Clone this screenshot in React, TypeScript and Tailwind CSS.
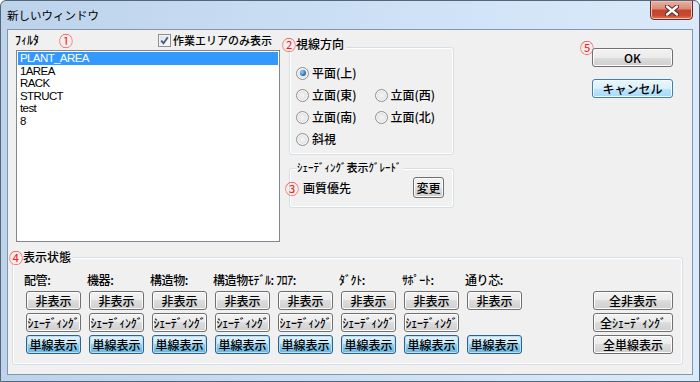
import type { ReactNode } from "react";

const BTN =
  "flex items-center justify-center rounded-[3px] border border-[#707070] bg-[linear-gradient(to_bottom,#f2f2f2_0%,#ebebeb_50%,#dddddd_50%,#cfcfcf_100%)] shadow-[inset_0_0_0_1px_#fcfcfc] text-[12px] leading-none text-black whitespace-nowrap";
const BTN_BLUE =
  "flex items-center justify-center rounded-[3px] border border-[#2c628b] bg-[linear-gradient(to_bottom,#e5f4fc_0%,#c4e5f6_50%,#98d1ef_50%,#68b3db_100%)] shadow-[inset_0_0_0_1px_#b6def4] text-[12px] leading-none text-black whitespace-nowrap";
const BTN_FOCUS =
  "flex items-center justify-center rounded-[3px] border border-[#3c7fb1] bg-[linear-gradient(to_bottom,#eaf6fd_0%,#d9f0fc_50%,#bee6fd_50%,#a7d9f5_100%)] shadow-[inset_0_0_0_1px_#f4fbff] text-[12px] leading-none text-black whitespace-nowrap";
const GROUP =
  "rounded-[3px] border border-[#d5dfe5] shadow-[inset_0_0_0_1px_#ffffff]";

const layers = ["PLANT_AREA", "1AREA", "RACK", "STRUCT", "test", "8"];

const columns = [
  { label: "配管:", shading: true },
  { label: "機器:", shading: true },
  { label: "構造物:", shading: true },
  { label: "構造物ﾓﾃﾞﾙ:", shading: true },
  { label: "ﾌﾛｱ:", shading: true },
  { label: "ﾀﾞｸﾄ:", shading: true },
  { label: "ｻﾎﾟｰﾄ:", shading: true },
  { label: "通り芯:", shading: false },
];

function Mark({ children }: { children: ReactNode }) {
  return (
    <span className="block text-[14px] leading-[14px] font-normal text-[#ff1a1a]">{children}</span>
  );
}

function Radio({ label, checked }: { label: string; checked?: boolean }) {
  return (
    <div className="flex w-[83px] items-center gap-[3px]">
      <div className="flex h-[13px] w-[13px] items-center justify-center rounded-full border border-[#8e8f8f] bg-[radial-gradient(circle,#f6f6f6_0%,#e4e4e4_55%,#d2d2d2_100%)] shadow-[inset_0_0_0_1px_#fafafa]">
        {checked && (
          <div className="h-[6px] w-[6px] rounded-full bg-[radial-gradient(circle_at_35%_35%,#9bd6ff_0%,#2f78c4_55%,#164d8c_100%)]" />
        )}
      </div>
      <span className="text-[12px] leading-[14px] whitespace-nowrap">{label}</span>
    </div>
  );
}

export default function App() {
  return (
    <div className="flex h-[382px] w-[700px] flex-col overflow-hidden rounded-t-[6px] border border-[#56667a] bg-[linear-gradient(to_right,#bcd3eb,#cfe2f6_60%,#dbeafa)] font-['Noto_Sans_CJK_JP',sans-serif] font-medium text-black">
      {/* title bar */}
      <div className="flex h-[28px] shrink-0 items-start">
        <span className="ml-[6px] mt-[7px] text-[11.5px] leading-[14px] font-normal">新しいウィンドウ</span>
        <div className="-mt-px ml-auto mr-[6px] flex h-[20px] w-[43px] items-center justify-center rounded-b-[4px] border border-[#6b2a20] bg-[linear-gradient(to_bottom,#eab0a2_0%,#d98a76_45%,#c2432b_50%,#c94a30_80%,#e2785c_100%)] shadow-[inset_0_0_0_1px_#f2c0b4]">
          <svg width="14" height="11" viewBox="0 0 14 11">
            <path d="M2 1.5 L12 9.5 M12 1.5 L2 9.5" stroke="#4a2320" strokeWidth="4.2" strokeLinecap="round" />
            <path d="M2 1.5 L12 9.5 M12 1.5 L2 9.5" stroke="#ffffff" strokeWidth="2.4" strokeLinecap="round" />
          </svg>
        </div>
      </div>

      {/* client */}
      <div className="mx-[6px] mb-[6px] flex flex-1 flex-col border border-[#8596ab] bg-[#f0f0f0]">
        <div className="flex h-[212px] shrink-0">
          {/* filter */}
          <div className="ml-[8px] flex w-[264px] flex-col">
            <div className="flex h-[20px] items-center">
              <span className="-ml-px text-[12px] leading-[14px]">ﾌｨﾙﾀ</span>
              <span className="ml-[20px]">
                <Mark>①</Mark>
              </span>
              <label className="ml-auto mr-[8px] flex items-center gap-[2px]">
                <span className="flex h-[13px] w-[13px] items-center justify-center border border-[#8e8f8f] bg-[linear-gradient(135deg,#dedede,#ffffff)] shadow-[inset_0_0_0_1px_#f4f4f4]">
                  <svg width="9" height="9" viewBox="0 0 9 9">
                    <path d="M1.2 4.6 L3.5 7.2 L7.8 1.2" fill="none" stroke="#3d5d8c" strokeWidth="1.8" />
                  </svg>
                </span>
                <span className="text-[11px] leading-[14px] whitespace-nowrap">作業エリアのみ表示</span>
              </label>
            </div>
            <div className="h-[192px] border border-[#828790] bg-white p-px font-['Liberation_Sans',sans-serif] text-[11.5px] font-normal tracking-[-0.6px]">
              {layers.map((name, i) => (
                <div
                  key={name}
                  className={
                    i === 0
                      ? "h-[12.5px] bg-[#3399ff] pl-[2px] leading-[12.5px] text-white"
                      : "h-[12.5px] pl-[2px] leading-[12.5px]"
                  }
                >
                  {name}
                </div>
              ))}
            </div>
          </div>

          {/* view direction + shading grade */}
          <div className="ml-[3px] flex w-[171px] flex-col">
            <div className={`ml-[6px] mt-[17px] pb-[4px] ${GROUP}`}>
              <div className="-ml-[8px] -mt-[11px] flex w-fit items-center bg-[#f0f0f0] pr-[2px]">
                <Mark>②</Mark>
                <span className="text-[12px] leading-[14px]">視線方向</span>
              </div>
              <div className="mt-[11px] flex flex-col pl-[6px]">
                <div className="flex h-[22px] items-center">
                  <Radio label="平面(上)" checked />
                </div>
                <div className="flex h-[22px] items-center">
                  <Radio label="立面(東)" />
                  <Radio label="立面(西)" />
                </div>
                <div className="flex h-[22px] items-center">
                  <Radio label="立面(南)" />
                  <Radio label="立面(北)" />
                </div>
                <div className="flex h-[22px] items-center">
                  <Radio label="斜視" />
                </div>
              </div>
            </div>

            <div className={`ml-[6px] mt-[13px] pb-[9px] ${GROUP}`}>
              <div className="-mt-[9px] ml-[6px] w-fit bg-[#f0f0f0] px-px text-[11px] leading-[14px] whitespace-nowrap">
                ｼｪｰﾃﾞｨﾝｸﾞ表示ｸﾞﾚｰﾄﾞ
              </div>
              <div className="mt-[3px] flex h-[21px] items-center pr-[9px]">
                <span className="-ml-[5px]">
                  <Mark>③</Mark>
                </span>
                <span className="ml-[4px] text-[12px] leading-[14px]">画質優先</span>
                <button className={`ml-auto h-[21px] w-[31px] ${BTN}`}>変更</button>
              </div>
            </div>
          </div>

          {/* OK / cancel */}
          <div className="ml-auto mr-[19px] flex">
            <div className="mr-[-2px] mt-[10px]">
              <Mark>⑤</Mark>
            </div>
            <div className="mt-[18px] flex flex-col gap-[12px]">
              <button className={`h-[19px] w-[81px] ${BTN}`}>OK</button>
              <button className={`h-[19px] w-[81px] ${BTN_FOCUS}`}>キャンセル</button>
            </div>
          </div>
        </div>

        {/* display state */}
        <div className={`ml-[4px] mr-[9px] mt-[15px] pb-[10px] ${GROUP}`}>
          <div className="-ml-[4px] -mt-[8px] flex w-fit items-center bg-[#f0f0f0] pr-[2px]">
            <Mark>④</Mark>
            <span className="text-[12px] leading-[14px]">表示状態</span>
          </div>
          <div className="mt-[9px] flex items-end pl-[13px] pr-[9px]">
            <div className="flex gap-[8px]">
              {columns.map((col) => (
                <div key={col.label} className="flex w-[55px] flex-col">
                  <span className="-ml-[2px] mb-[4px] text-[12px] leading-[14px] tracking-[-0.4px] whitespace-nowrap">
                    {col.label}
                  </span>
                  <div className="flex flex-col gap-[3px]">
                    <button className={`h-[19px] w-[55px] ${BTN}`}>非表示</button>
                    {col.shading ? (
                      <button className={`h-[19px] w-[55px] tracking-[-0.3px] ${BTN} text-[11px]`}>
                        ｼｪｰﾃﾞｨﾝｸﾞ
                      </button>
                    ) : (
                      <div className="h-[19px] w-[55px]" />
                    )}
                    <button className={`h-[19px] w-[55px] ${BTN_BLUE}`}>単線表示</button>
                  </div>
                </div>
              ))}
            </div>
            <div className="ml-auto flex flex-col gap-[3px]">
              <button className={`h-[19px] w-[80px] ${BTN}`}>全非表示</button>
              <button className={`h-[19px] w-[80px] ${BTN}`}>全ｼｪｰﾃﾞｨﾝｸﾞ</button>
              <button className={`h-[19px] w-[80px] ${BTN}`}>全単線表示</button>
            </div>
          </div>
        </div>
      </div>
    </div>
  );
}
